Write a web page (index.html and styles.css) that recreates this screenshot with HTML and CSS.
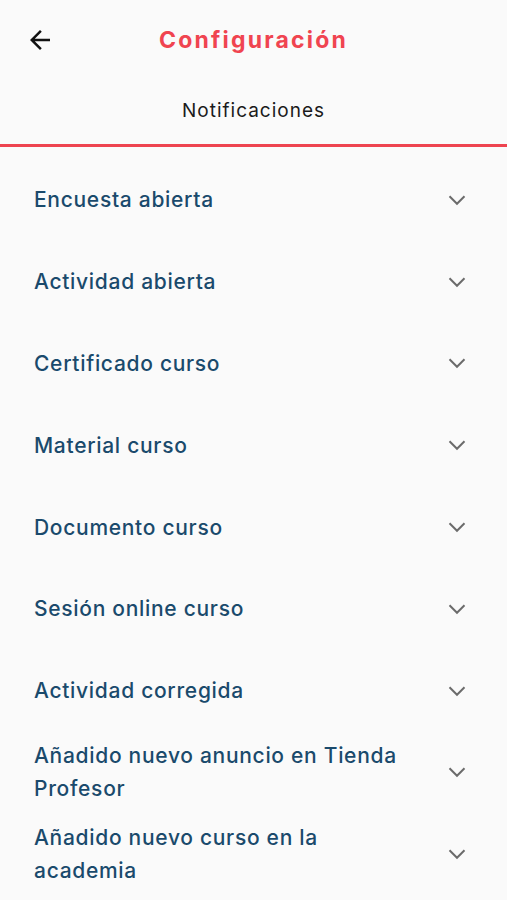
FILE: index.html
```html
<!DOCTYPE html>
<html lang="es">
<head>
<meta charset="utf-8">
<title>Configuración</title>
<link rel="stylesheet" href="styles.css">
</head>
<body>
<div class="app">
  <header class="topbar">
    <button class="back" aria-label="Atrás">
      <svg width="30" height="30" viewBox="0 0 24 24"><path d="M20 11H7.83l5.59-5.59L12 4l-8 8 8 8 1.41-1.41L7.83 13H20v-2z" fill="#111"/></svg>
    </button>
    <h1 class="title">Configuración</h1>
  </header>
  <nav class="tabs">
    <div class="tab">Notificaciones</div>
  </nav>
  <ul class="list">
    <li class="item"><span class="label">Encuesta abierta</span><svg class="chev" width="24" height="24" viewBox="0 0 24 24"><path d="M4.5 8.25L12 15.75L19.5 8.25" fill="none" stroke="#6b6b6b" stroke-width="2"/></svg></li>
    <li class="item"><span class="label">Actividad abierta</span><svg class="chev" width="24" height="24" viewBox="0 0 24 24"><path d="M4.5 8.25L12 15.75L19.5 8.25" fill="none" stroke="#6b6b6b" stroke-width="2"/></svg></li>
    <li class="item"><span class="label">Certificado curso</span><svg class="chev" width="24" height="24" viewBox="0 0 24 24"><path d="M4.5 8.25L12 15.75L19.5 8.25" fill="none" stroke="#6b6b6b" stroke-width="2"/></svg></li>
    <li class="item"><span class="label">Material curso</span><svg class="chev" width="24" height="24" viewBox="0 0 24 24"><path d="M4.5 8.25L12 15.75L19.5 8.25" fill="none" stroke="#6b6b6b" stroke-width="2"/></svg></li>
    <li class="item"><span class="label">Documento curso</span><svg class="chev" width="24" height="24" viewBox="0 0 24 24"><path d="M4.5 8.25L12 15.75L19.5 8.25" fill="none" stroke="#6b6b6b" stroke-width="2"/></svg></li>
    <li class="item"><span class="label">Sesión online curso</span><svg class="chev" width="24" height="24" viewBox="0 0 24 24"><path d="M4.5 8.25L12 15.75L19.5 8.25" fill="none" stroke="#6b6b6b" stroke-width="2"/></svg></li>
    <li class="item"><span class="label">Actividad corregida</span><svg class="chev" width="24" height="24" viewBox="0 0 24 24"><path d="M4.5 8.25L12 15.75L19.5 8.25" fill="none" stroke="#6b6b6b" stroke-width="2"/></svg></li>
    <li class="item"><span class="label">Añadido nuevo anuncio en Tienda Profesor</span><svg class="chev" width="24" height="24" viewBox="0 0 24 24"><path d="M4.5 8.25L12 15.75L19.5 8.25" fill="none" stroke="#6b6b6b" stroke-width="2"/></svg></li>
    <li class="item"><span class="label">Añadido nuevo curso en la academia</span><svg class="chev" width="24" height="24" viewBox="0 0 24 24"><path d="M4.5 8.25L12 15.75L19.5 8.25" fill="none" stroke="#6b6b6b" stroke-width="2"/></svg></li>
  </ul>
</div>
</body>
</html>
```
FILE: styles.css
```css
* { box-sizing: border-box; }
html, body { margin: 0; padding: 0; }
body {
  background: #fafafa;
  font-family: Inter, "DejaVu Sans", sans-serif;
  width: 507px;
  height: 900px;
  overflow: hidden;
}
.app { display: flex; flex-direction: column; }
.topbar {
  height: 80px;
  display: flex;
  align-items: center;
  justify-content: center;
  position: relative;
}
.back {
  position: absolute;
  left: 25px;
  top: 25px;
  border: 0;
  background: none;
  padding: 0;
  width: 30px;
  height: 30px;
  display: flex;
}
.title {
  margin: 0;
  font-size: 23px;
  font-weight: 700;
  letter-spacing: 2.2px;
  color: #f04450;
}
.tabs {
  height: 67px;
  border-bottom: 3px solid #ee4450;
  display: flex;
  justify-content: center;
  align-items: center;
  padding-bottom: 4px;
}
.tab {
  font-size: 19px;
  color: #1a1a1a;
  letter-spacing: 1px;
}
.list {
  list-style: none;
  margin: 0;
  padding: 12px 0 0;
}
.item {
  height: 81.8px;
  display: flex;
  align-items: center;
  justify-content: space-between;
  padding: 0 38px 0 34px;
}
.label {
  font-size: 21px;
  font-weight: 500;
  color: #1a4a6c;
  line-height: 33px;
  max-width: 375px;
  letter-spacing: 0.7px;
}
.chev { flex: none; }
```
